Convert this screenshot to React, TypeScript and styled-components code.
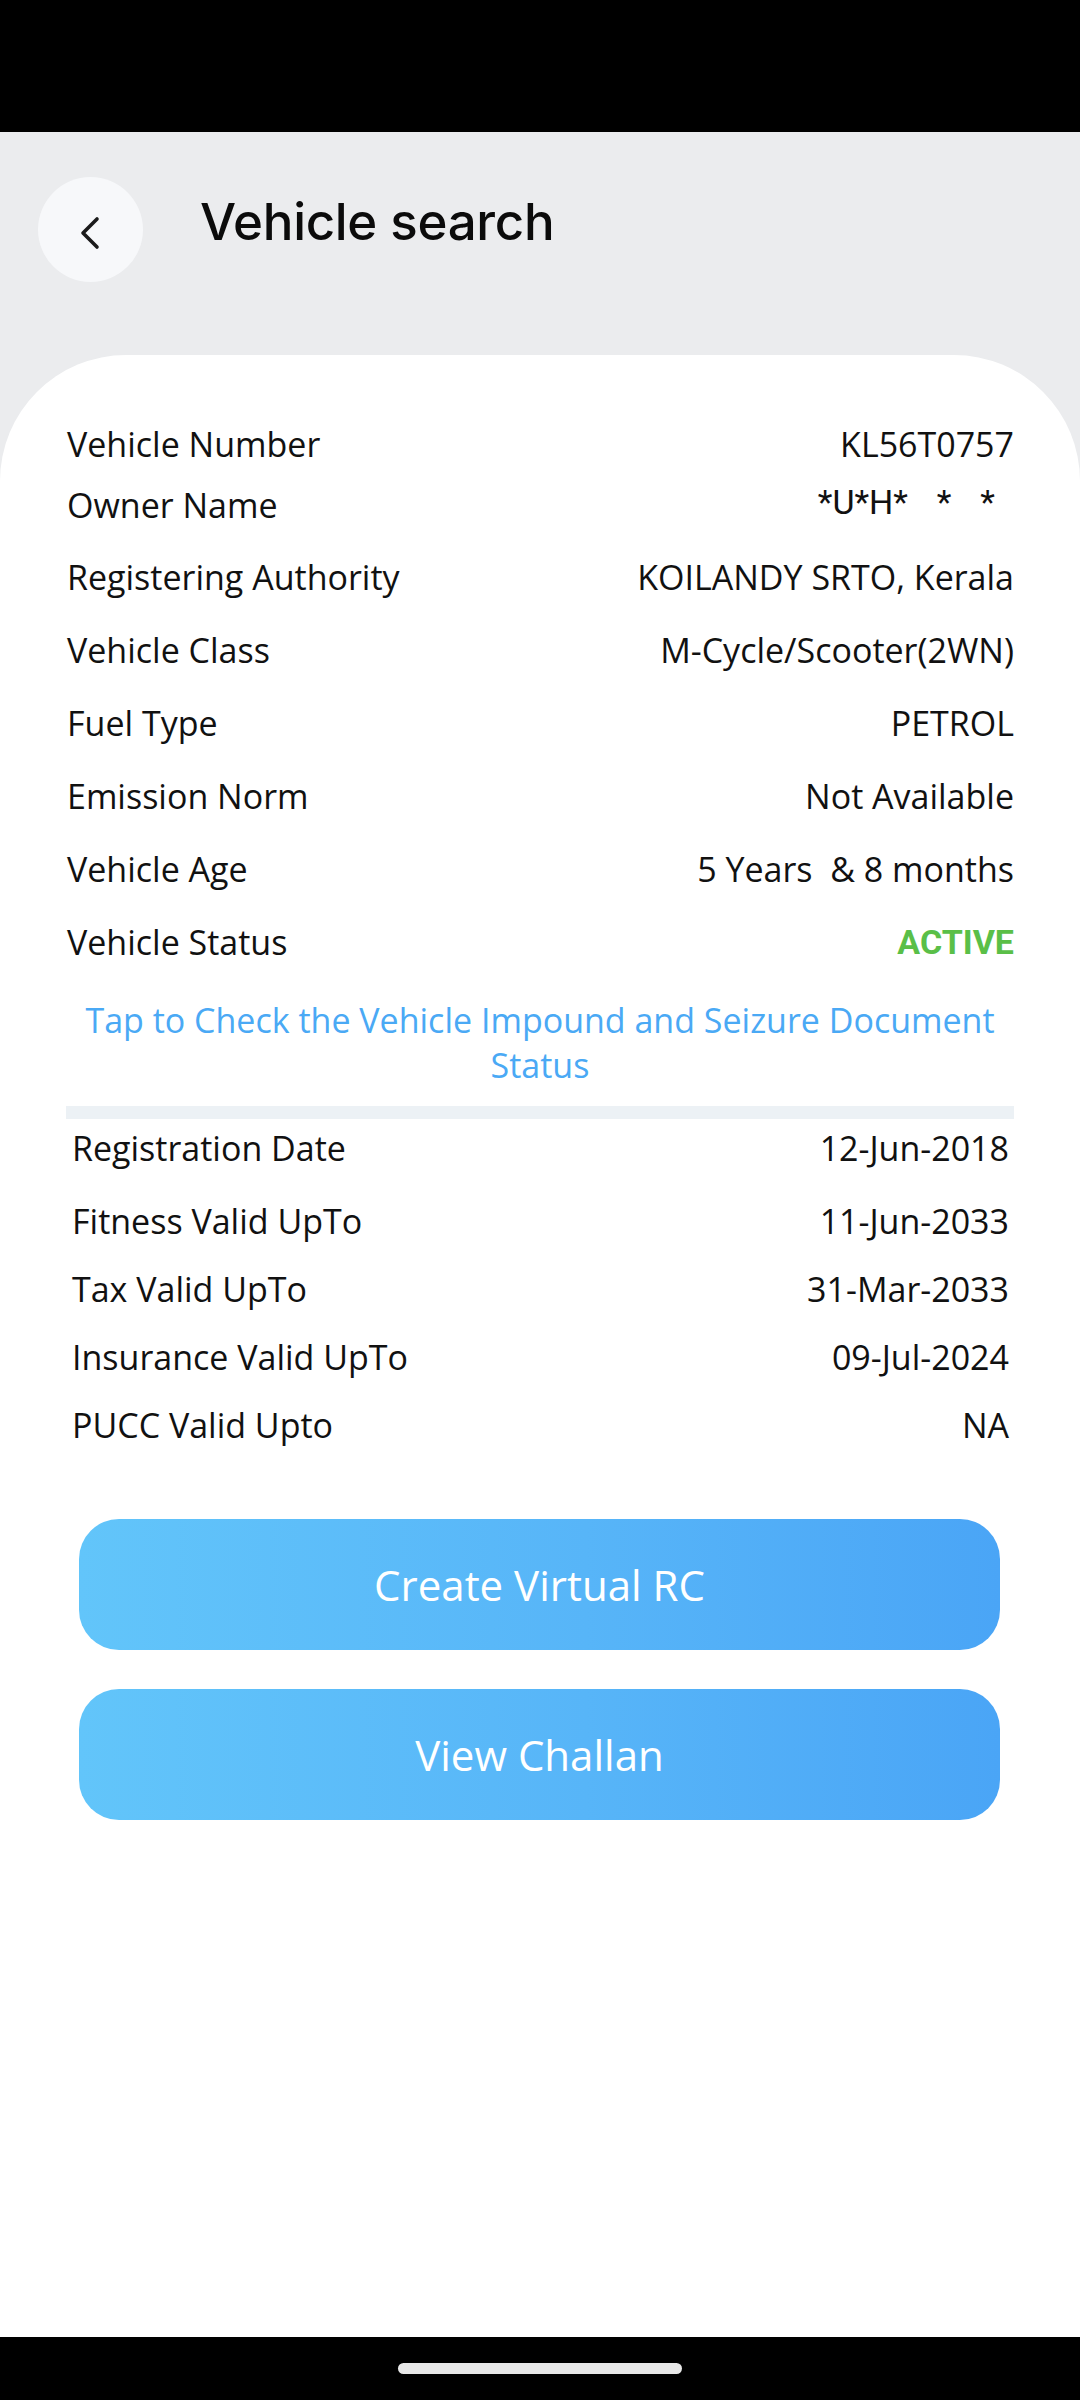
import React from "react";
import styled, { createGlobalStyle } from "styled-components";

const GlobalStyle = createGlobalStyle`
  html, body {
    margin: 0;
    padding: 0;
    background: #ebecee;
  }
  * { box-sizing: border-box; }
`;

const Screen = styled.div`
  width: 1080px;
  height: 2400px;
  display: flex;
  flex-direction: column;
  background: #ebecee;
  font-family: "Open Sans", "Noto Sans", sans-serif;
  color: #111;
  overflow: hidden;
`;

const StatusBar = styled.div`
  height: 132px;
  flex: none;
  background: #000;
`;

const Header = styled.header`
  height: 223px;
  flex: none;
  display: flex;
  align-items: flex-start;
  padding: 45px 0 0 38px;
  gap: 57px;
`;

const BackButton = styled.button`
  width: 105px;
  height: 105px;
  border-radius: 50%;
  border: none;
  background: #f7f8fa;
  display: flex;
  align-items: center;
  justify-content: center;
  padding: 0;
  padding-top: 6px;
  cursor: pointer;
`;

const Title = styled.h1`
  margin: 0;
  margin-top: 14px;
  font-family: Inter, "Open Sans", sans-serif;
  font-weight: 500;
  font-size: 51px;
  letter-spacing: -0.3px;
  line-height: 62px;
  color: #0b0b0b;
`;

const Card = styled.main`
  flex: 1;
  background: #fff;
  border-radius: 126px 126px 0 0;
  padding: 67px 0 0;
  display: flex;
  flex-direction: column;
`;

const Section = styled.section<{ $inset: number }>`
  display: flex;
  flex-direction: column;
  padding: 0 ${(p) => p.$inset}px 0 ${(p) => p.$inset + 1}px;
`;

const Row = styled.div<{ $h: number }>`
  height: ${(p) => p.$h}px;
  display: flex;
  justify-content: space-between;
  align-items: flex-start;
  font-size: 34px;
  line-height: 44px;
`;

const Label = styled.span`
  color: #111;
`;

const Value = styled.span`
  color: #111;
  text-align: right;
  white-space: pre;
`;

const MaskedValue = styled.span`
  font-family: Roboto, "Liberation Sans", sans-serif;
  font-size: 34px;
  word-spacing: 6px;
  color: #111;
  white-space: pre;
  padding-right: 19px;
  margin-top: -3px;
`;

const StatusValue = styled.span`
  font-family: Roboto, "Liberation Sans", sans-serif;
  font-weight: 700;
  font-size: 34px;
  color: #5abf48;
`;

const ImpoundLink = styled.a`
  display: block;
  margin: 34px 0 0;
  text-align: center;
  font-size: 34px;
  line-height: 45px;
  color: #4aa9f5;
  padding: 0 66px;
  cursor: pointer;
`;

const Divider = styled.div`
  height: 13px;
  margin: 18px 66px 7px 66px;
  background: #ecf1f5;
`;

const Actions = styled.div`
  display: flex;
  flex-direction: column;
  gap: 39px;
  padding: 72px 80px 0 79px;
`;

const ActionButton = styled.button`
  height: 131px;
  border: none;
  border-radius: 40px;
  background: linear-gradient(90deg, #62c5fa 0%, #57b5f8 55%, #4aa5f6 100%);
  color: #fff;
  font-family: "Open Sans", "Noto Sans", sans-serif;
  font-size: 42px;
  cursor: pointer;
`;

const NavBar = styled.div`
  height: 63px;
  flex: none;
  background: #000;
  display: flex;
  align-items: center;
  justify-content: center;
`;

const Handle = styled.div`
  width: 284px;
  height: 11px;
  border-radius: 6px;
  background: #e8e8e8;
`;

const BackIcon = () => (
  <svg width="24" height="34" viewBox="0 0 24 34" fill="none">
    <path
      d="M18 3 L4 17 L18 31"
      stroke="#1b1b1b"
      strokeWidth="3.6"
      strokeLinecap="round"
      strokeLinejoin="round"
    />
  </svg>
);

type Item = { label: string; value: React.ReactNode; h: number };

const vehicleInfo: Item[] = [
  { label: "Vehicle Number", value: <Value>KL56T0757</Value>, h: 61 },
  { label: "Owner Name", value: <MaskedValue>{"*U*H*  *  *"}</MaskedValue>, h: 72 },
  { label: "Registering Authority", value: <Value>KOILANDY SRTO, Kerala</Value>, h: 73 },
  { label: "Vehicle Class", value: <Value>M-Cycle/Scooter(2WN)</Value>, h: 73 },
  { label: "Fuel Type", value: <Value>PETROL</Value>, h: 73 },
  { label: "Emission Norm", value: <Value>Not Available</Value>, h: 73 },
  { label: "Vehicle Age", value: <Value>{"5 Years  & 8 months"}</Value>, h: 73 },
  { label: "Vehicle Status", value: <StatusValue>ACTIVE</StatusValue>, h: 44 },
];

const validity: Item[] = [
  { label: "Registration Date", value: <Value>12-Jun-2018</Value>, h: 73 },
  { label: "Fitness Valid UpTo", value: <Value>11-Jun-2033</Value>, h: 68 },
  { label: "Tax Valid UpTo", value: <Value>31-Mar-2033</Value>, h: 68 },
  { label: "Insurance Valid UpTo", value: <Value>09-Jul-2024</Value>, h: 68 },
  { label: "PUCC Valid Upto", value: <Value>NA</Value>, h: 44 },
];

export default function App() {
  return (
    <>
      <GlobalStyle />
      <Screen>
        <StatusBar />
        <Header>
          <BackButton aria-label="Back">
            <BackIcon />
          </BackButton>
          <Title>Vehicle search</Title>
        </Header>
        <Card>
          <Section $inset={66}>
            {vehicleInfo.map((r) => (
              <Row key={r.label} $h={r.h}>
                <Label>{r.label}</Label>
                {r.value}
              </Row>
            ))}
          </Section>
          <ImpoundLink>
            Tap to Check the Vehicle Impound and Seizure Document Status
          </ImpoundLink>
          <Divider />
          <Section $inset={71}>
            {validity.map((r) => (
              <Row key={r.label} $h={r.h}>
                <Label>{r.label}</Label>
                {r.value}
              </Row>
            ))}
          </Section>
          <Actions>
            <ActionButton>Create Virtual RC</ActionButton>
            <ActionButton>View Challan</ActionButton>
          </Actions>
        </Card>
        <NavBar>
          <Handle />
        </NavBar>
      </Screen>
    </>
  );
}
